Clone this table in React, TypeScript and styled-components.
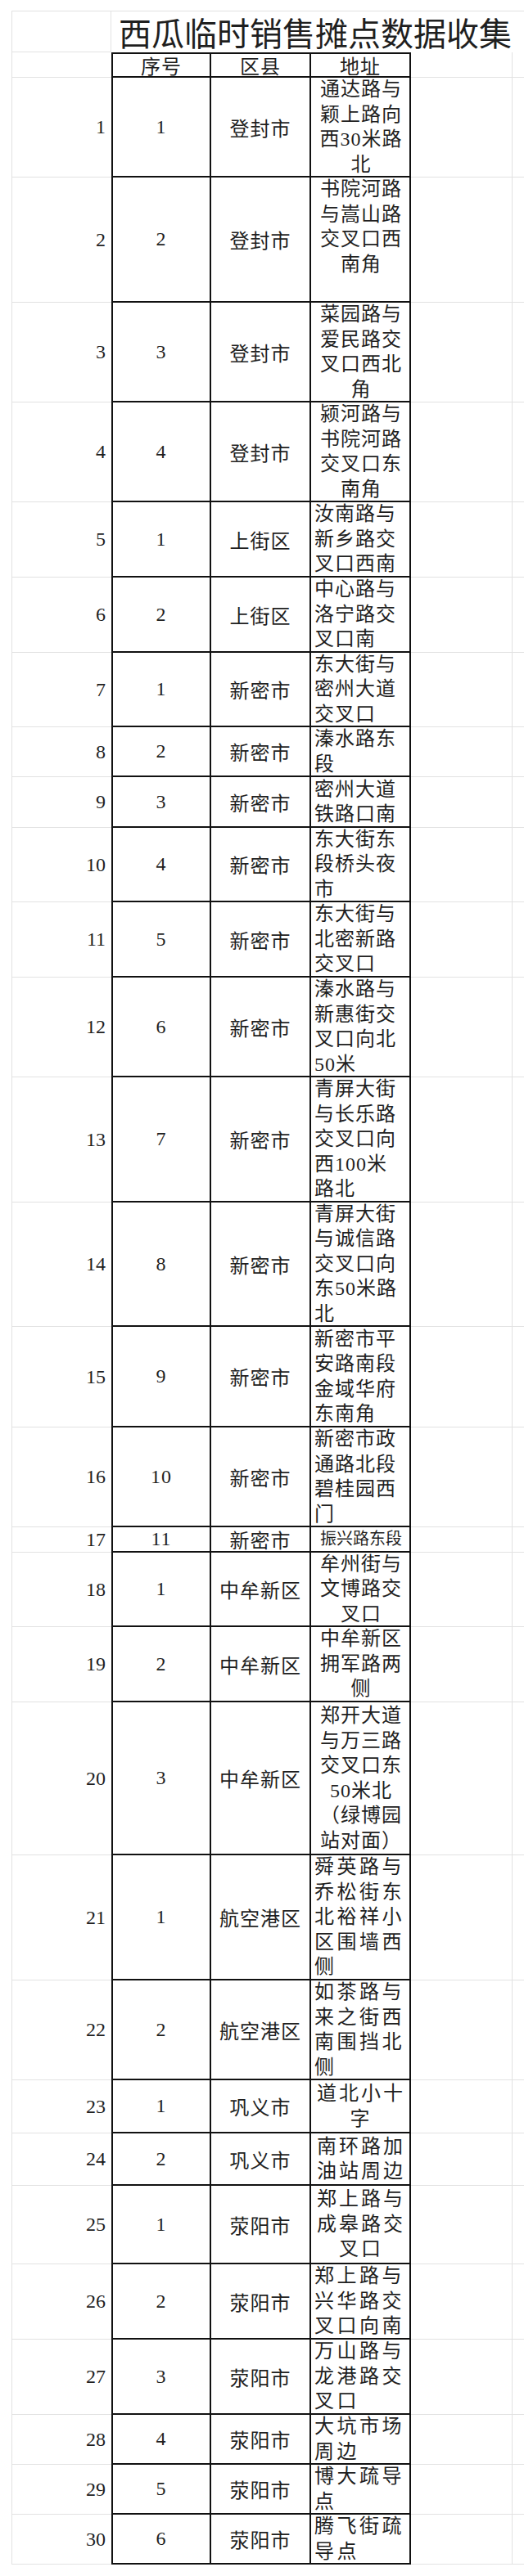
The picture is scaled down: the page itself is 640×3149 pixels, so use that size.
import React from "react";
import styled, { createGlobalStyle, css } from "styled-components";

const GRID = "#e2e2e2";
const INK = "#1f1f1f";

const GlobalStyle = createGlobalStyle`
  html, body {
    margin: 0;
    padding: 0;
    background: #ffffff;
  }
  body {
    font-family: "Liberation Serif", "Noto Sans CJK SC", serif;
    color: ${INK};
  }
`;

const Sheet = styled.div`
  width: 640px;
  box-sizing: border-box;
  padding: 13px 0 14px 14px;
`;

const Row = styled.div<{ $h: number }>`
  display: grid;
  grid-template-columns: 122px 122px 122px 122px 124px 1fr;
  height: ${(p) => p.$h}px;
`;

const Label = styled.div<{ $top?: boolean; $rule?: boolean }>`
  box-sizing: border-box;
  border-left: 1px solid ${GRID};
  border-bottom: 1px solid ${GRID};
  ${(p) => p.$top && css`border-top: 1px solid ${GRID};`}
  ${(p) => p.$rule && css`border-right: 1px solid ${GRID};`}
  display: flex;
  align-items: center;
  justify-content: flex-end;
  padding-right: 7px;
  font-size: 24px;
`;

const Title = styled.div`
  grid-column: 2 / -1;
  box-sizing: border-box;
  border-top: 1px solid ${GRID};
  display: flex;
  align-items: flex-end;
  padding: 0 0 2px 9px;
  font-family: "Noto Sans CJK SC", sans-serif;
  font-size: 40px;
  line-height: 46px;
  white-space: nowrap;
  overflow: visible;
`;

const Cell = styled.div<{ $first?: boolean; $head?: boolean }>`
  box-sizing: border-box;
  border-right: 2px solid #111;
  border-bottom: 2px solid #111;
  ${(p) => p.$first && css`border-left: 2px solid #111;`}
  ${(p) => p.$head && css`border-top: 2px solid #111;`}
  display: flex;
  align-items: center;
  justify-content: center;
  font-size: 24px;
  letter-spacing: 1px;
  white-space: nowrap;
  overflow: hidden;
`;

const Address = styled(Cell)<{ $align: "c" | "l"; $spread: number; $size: number }>`
  flex-direction: column;
  align-items: ${(p) => (p.$align === "c" ? "center" : "flex-start")};
  padding: 0 2px 0 4px;
  font-size: ${(p) => p.$size}px;
  letter-spacing: ${(p) => p.$spread}px;
  line-height: 30.5px;
`;

const Line = styled.span`
  display: block;
  min-height: 30.5px;
`;

const Blank = styled.div<{ $head?: boolean; $rule?: boolean }>`
  box-sizing: border-box;
  border-bottom: 1px solid ${GRID};
  ${(p) => p.$rule && css`border-right: 1px solid ${GRID};`}
  ${(p) => p.$head && css`border-top: 1px solid ${GRID};`}
`;

type Item = {
  seq: number;
  dist: string;
  addr: string[];
  h: number;
  align: "c" | "l";
  spread?: number;
  size?: number;
};

const items: Item[] = [
  { seq: 1, dist: "登封市", addr: ["通达路与", "颖上路向", "西30米路", "北"], h: 122, align: "c" },
  { seq: 2, dist: "登封市", addr: ["书院河路", "与嵩山路", "交叉口西", "南角", "\u00a0"], h: 153, align: "c" },
  { seq: 3, dist: "登封市", addr: ["菜园路与", "爱民路交", "叉口西北", "角"], h: 122, align: "c" },
  { seq: 4, dist: "登封市", addr: ["颍河路与", "书院河路", "交叉口东", "南角"], h: 122, align: "c" },
  { seq: 1, dist: "上街区", addr: ["汝南路与", "新乡路交", "叉口西南"], h: 92, align: "l" },
  { seq: 2, dist: "上街区", addr: ["中心路与", "洛宁路交", "叉口南"], h: 92, align: "l" },
  { seq: 1, dist: "新密市", addr: ["东大街与", "密州大道", "交叉口"], h: 91, align: "l" },
  { seq: 2, dist: "新密市", addr: ["溱水路东", "段"], h: 61, align: "l" },
  { seq: 3, dist: "新密市", addr: ["密州大道", "铁路口南"], h: 62, align: "l" },
  { seq: 4, dist: "新密市", addr: ["东大街东", "段桥头夜", "市"], h: 91, align: "l" },
  { seq: 5, dist: "新密市", addr: ["东大街与", "北密新路", "交叉口"], h: 92, align: "l" },
  { seq: 6, dist: "新密市", addr: ["溱水路与", "新惠街交", "叉口向北", "50米"], h: 122, align: "l" },
  { seq: 7, dist: "新密市", addr: ["青屏大街", "与长乐路", "交叉口向", "西100米", "路北"], h: 153, align: "l" },
  { seq: 8, dist: "新密市", addr: ["青屏大街", "与诚信路", "交叉口向", "东50米路", "北"], h: 152, align: "l" },
  { seq: 9, dist: "新密市", addr: ["新密市平", "安路南段", "金域华府", "东南角"], h: 123, align: "l" },
  { seq: 10, dist: "新密市", addr: ["新密市政", "通路北段", "碧桂园西", "门"], h: 122, align: "l" },
  { seq: 11, dist: "新密市", addr: ["振兴路东段"], h: 31, align: "c", size: 20, spread: 0 },
  { seq: 1, dist: "中牟新区", addr: ["牟州街与", "文博路交", "叉口"], h: 91, align: "c" },
  { seq: 2, dist: "中牟新区", addr: ["中牟新区", "拥军路两", "侧"], h: 92, align: "c" },
  { seq: 3, dist: "中牟新区", addr: ["郑开大道", "与万三路", "交叉口东", "50米北", "（绿博园", "站对面）"], h: 187, align: "c" },
  { seq: 1, dist: "航空港区", addr: ["舜英路与", "乔松街东", "北裕祥小", "区围墙西", "侧"], h: 153, align: "l", spread: 3.5 },
  { seq: 2, dist: "航空港区", addr: ["如茶路与", "来之街西", "南围挡北", "侧"], h: 122, align: "l", spread: 3.5 },
  { seq: 1, dist: "巩义市", addr: ["道北小十", "字"], h: 65, align: "c", spread: 3 },
  { seq: 2, dist: "巩义市", addr: ["南环路加", "油站周边"], h: 64, align: "c", spread: 3 },
  { seq: 1, dist: "荥阳市", addr: ["郑上路与", "成皋路交", "叉口"], h: 96, align: "c", spread: 3 },
  { seq: 2, dist: "荥阳市", addr: ["郑上路与", "兴华路交", "叉口向南"], h: 92, align: "l", spread: 3.5 },
  { seq: 3, dist: "荥阳市", addr: ["万山路与", "龙港路交", "叉口"], h: 92, align: "l", spread: 3.5 },
  { seq: 4, dist: "荥阳市", addr: ["大坑市场", "周边"], h: 61, align: "l", spread: 3.5 },
  { seq: 5, dist: "荥阳市", addr: ["博大疏导", "点"], h: 61, align: "l", spread: 3.5 },
  { seq: 6, dist: "荥阳市", addr: ["腾飞街疏", "导点"], h: 61, align: "l", spread: 3.5 },
];

export default function App() {
  return (
    <>
      <GlobalStyle />
      <Sheet>
        <Row $h={51}>
          <Label $top $rule />
          <Title>西瓜临时销售摊点数据收集</Title>
        </Row>
        <Row $h={31}>
          <Label />
          <Cell $first $head>序号</Cell>
          <Cell $head>区县</Cell>
          <Cell $head>地址</Cell>
          <Blank $rule />
          <Blank />
        </Row>
        {items.map((it, i) => (
          <Row key={i} $h={it.h}>
            <Label>{i + 1}</Label>
            <Cell $first>{it.seq}</Cell>
            <Cell>{it.dist}</Cell>
            <Address $align={it.align} $spread={it.spread ?? 1} $size={it.size ?? 24}>
              {it.addr.map((line, j) => (
                <Line key={j}>{line}</Line>
              ))}
            </Address>
            <Blank $rule />
            <Blank />
          </Row>
        ))}
      </Sheet>
    </>
  );
}
